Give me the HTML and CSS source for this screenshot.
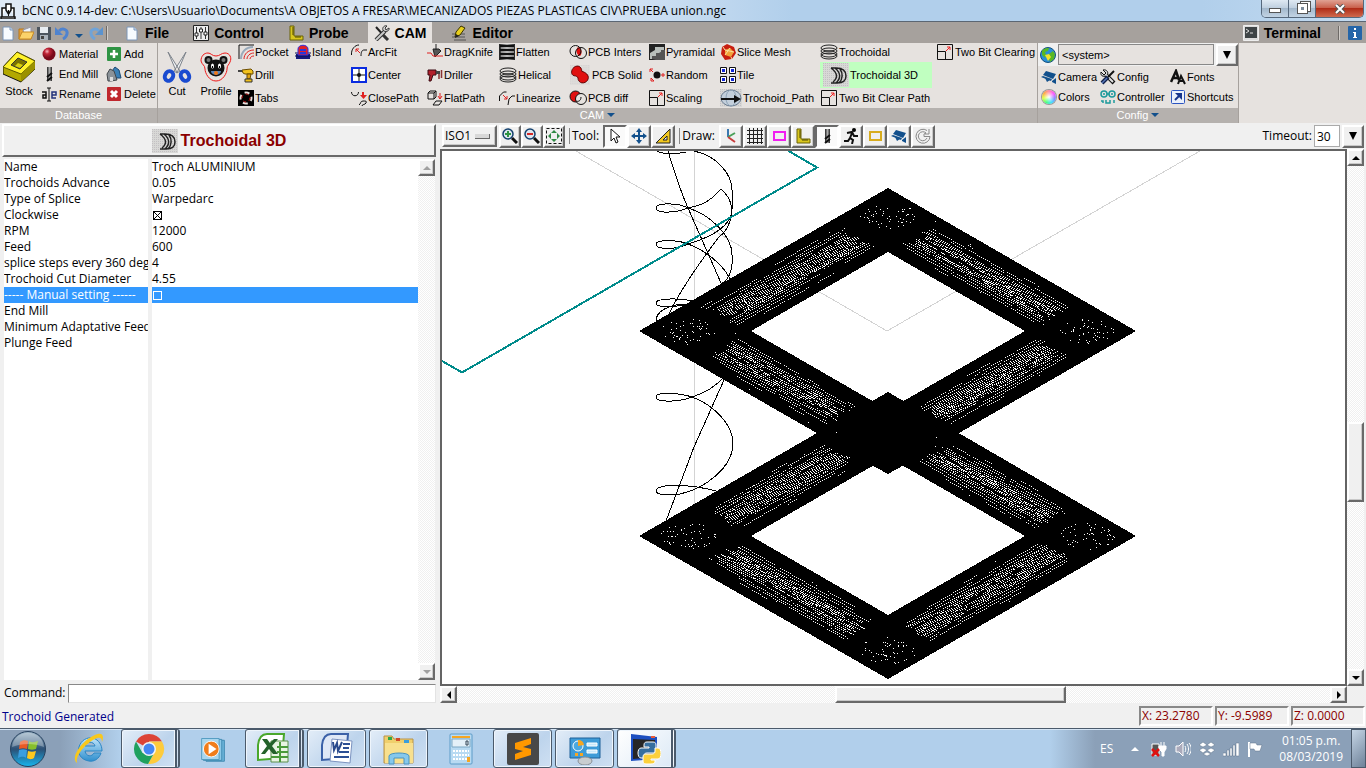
FILE: index.html
```html
<!DOCTYPE html>
<html lang="en">
<head>
    <meta charset="UTF-8">
    <meta name="viewport" content="width=device-width, initial-scale=1.0">
    <title>bCNC 0.9.14-dev</title>
    <link rel="stylesheet" href="styles.css">
</head>
<body>
    <!-- icon sprite -->
    <svg class="sprite" aria-hidden="true">
        <defs>
            <linearGradient id="steel"><stop offset="0" stop-color="#222"/><stop offset=".5" stop-color="#aaa"/><stop offset="1" stop-color="#222"/></linearGradient>
            <linearGradient id="sky" x2="0" y2="1"><stop offset="0" stop-color="#bfe4fa"/><stop offset="1" stop-color="#2f8fce"/></linearGradient>
            <linearGradient id="orb" x2="0" y2="1"><stop offset="0" stop-color="#9db6c8"/><stop offset=".5" stop-color="#2b4f74"/><stop offset="1" stop-color="#19b5ee"/></linearGradient>
            <radialGradient id="ball" cx=".35" cy=".3"><stop offset="0" stop-color="#f6b6be"/><stop offset=".4" stop-color="#c02436"/><stop offset="1" stop-color="#7a0a1a"/></radialGradient>
            <pattern id="grain" width="2" height="2" patternUnits="userSpaceOnUse"><rect width="2" height="2" fill="#d8d8d6"/><path d="M0 0h1v1H0z" fill="#c3c0c3"/></pattern>
        </defs>
        <symbol id="logo" viewBox="0 0 16 16"><path d="M1 14h14v2H1zM2 14V5h4M14 14V5h-3M6 1h5v6l-2.500 4L6 7z" fill="#fff" stroke="#111" stroke-width="1.500"/><path d="M8.500 7v6" stroke="#111"/></symbol>
        <symbol id="new" viewBox="0 0 16 16"><path d="M3 2h7l3 3v10H3z" fill="#f7fbff" stroke="#7d96b8"/><path d="M10 2v3h3" fill="#cfe0f2" stroke="#7d96b8"/></symbol>
        <symbol id="open" viewBox="0 0 16 16"><path d="M1 14V4h5l1 2h6v8z" fill="#e8a33a" stroke="#b87718"/><path d="M5 5l8-3v6H6z" fill="#eef4fa" stroke="#99a"/><path d="M1 14l3-7h12l-3 7z" fill="#fbd26a" stroke="#c88a22"/></symbol>
        <symbol id="save" viewBox="0 0 16 16"><path d="M1 2h14v13H1z" fill="#4d5660"/><path d="M4 2h8v6H4z" fill="#e8edf2"/><path d="M4 10h8v5H4z" fill="#aab3bc"/><path d="M5 11h3v3H5z" fill="#444"/></symbol>
        <symbol id="undo" viewBox="0 0 16 16"><path d="M5 6c4-4 9-1 8 3-.5 2-2 4-4 5" fill="none" stroke="#4f83cf" stroke-width="3"/><path d="M1 2v8h8z" fill="#4f83cf"/></symbol>
        <symbol id="redo" viewBox="0 0 16 16"><path d="M11 6C7 2 2 5 3 9c.5 2 2 4 4 5" fill="none" stroke="#6fa3d8" stroke-width="3"/><path d="M15 2v8H7z" fill="#5b93cf"/></symbol>
        <symbol id="control" viewBox="0 0 16 16"><path d="M.5.500h15v15H.500z" fill="#eee" stroke="#222"/><path d="M3.500 2v12M8 2v12M12.500 2v12" stroke="#333"/><path d="M2 8h3v3H2zM6.500 4h3v3h-3zM11 7h3v3h-3z" fill="#fff" stroke="#222"/></symbol>
        <symbol id="ruler" viewBox="0 0 16 16"><path d="M2 1h4v10h9v4H2z" fill="#d8c61e" stroke="#6b6208"/><path d="M6 3H4M6 5H4M6 7H4M6 9H4M8 11v2M10 11v2M12 11v2" stroke="#4d4605"/></symbol>
        <symbol id="tools" viewBox="0 0 16 16"><path d="M2 2l10 11" stroke="#222" stroke-width="2"/><path d="M9 10l5 5" stroke="#333" stroke-width="3"/><path d="M2 15l9-9" stroke="#333" stroke-width="4"/><path d="M2 15l9-9" stroke="#ccc" stroke-width="2"/><path d="M15 3l-3 2-1-2 2-2c-3-1-5 2-4 4 2 3 7 1 6-2z" fill="#ddd" stroke="#333"/></symbol>
        <symbol id="config" viewBox="0 0 16 16"><path d="M5 5l9 9" stroke="#111" stroke-width="4"/><path d="M1 3l3 3 2-2-3-3c4-1 6 3 4 5S0 8 1 3z" fill="#ddd" stroke="#111"/><path d="M6 6l7 7" stroke="#e4e4e4" stroke-width="2"/><path d="M2 14l6-6" stroke="#10204a" stroke-width="4"/><path d="M2 14l5-5" stroke="#5877b8" stroke-width="1.500"/><path d="M8 8l6-6" stroke="#111" stroke-width="2"/></symbol>
        <symbol id="editor" viewBox="0 0 16 16"><path d="M1 9h13M1 12h13M3 15h12" stroke="#555"/><path d="M4 12l1-5 5-6 4 2-5 7z" fill="#e8cf1c" stroke="#3a3200"/><path d="M4 13l1-4 3 2z" fill="#222"/></symbol>
        <symbol id="terminal" viewBox="0 0 16 16"><path d="M.5.500h15v15H.500z" fill="#ddd" stroke="#eee"/><path d="M2 2h12v11H2z" fill="#3e4446"/><path d="M3 4l3 2-3 2M7 8h3" fill="none" stroke="#ddd"/></symbol>
        <symbol id="info" viewBox="0 0 16 16"><rect x="1" y="1" width="14" height="14" rx="1" fill="#2565a8"/><path d="M7 3h2v2H7zM6 7h3v5h1v1H6v-1h1V8H6z" fill="#fff"/></symbol>

        <symbol id="stock" viewBox="0 0 32 32"><path d="M0 16L14 1l18 9v8L18 31 0 23z" fill="#b3a800" stroke="#111"/><path d="M0 16L14 1l18 9-14 13z" fill="#fff22a" stroke="#5b5600"/><path d="M8 14l7-7 9 4-7 7z" fill="#7a7200" stroke="#333"/><path d="M12 15l3-3 5 2-3 3z" fill="#d9cf10"/><path d="M18 23l14-13v8L18 31z" fill="#9b9100"/></symbol>
        <symbol id="material" viewBox="0 0 16 16"><circle cx="8" cy="8" r="6.500" fill="url(#ball)"/></symbol>
        <symbol id="endmill" viewBox="0 0 16 16"><path d="M6 1h5v14H6z" fill="url(#steel)"/><path d="M6 11l5-4M6 15l5-4" stroke="#111" stroke-width="2"/></symbol>
        <symbol id="rename" viewBox="0 0 16 16"><path d="M6 2h4M6 15h4M8 2v13" stroke="#111" fill="none"/><path d="M1 6h4v6H2V9h3" fill="none" stroke="#111" stroke-width="1.500"/><path d="M11 9h4V6h-4v6h4" fill="none" stroke="#24337c" stroke-width="1.500"/></symbol>
        <symbol id="add" viewBox="0 0 16 16"><rect x="1" y="1" width="14" height="14" rx="1" fill="#2f9444"/><path d="M8 4v8M4 8h8" stroke="#fff" stroke-width="2.500"/></symbol>
        <symbol id="clone" viewBox="0 0 16 16"><path d="M6 5l3-4 4 3 2 8H7z" fill="#3a7fb5" stroke="#1c4870"/><path d="M1 8l3-5 4 2 3 9-6 1H2z" fill="#8b9298" stroke="#41474c"/><path d="M4 11h3v4H4z" fill="#ddd"/></symbol>
        <symbol id="delete" viewBox="0 0 16 16"><rect x="1" y="1" width="14" height="14" rx="1" fill="#c0272d"/><path d="M5 5l6 6M11 5l-6 6" stroke="#fff" stroke-width="3"/></symbol>
        <symbol id="cut" viewBox="0 0 32 32"><path d="M7 1l12 19-3 2zM25 1L13 20l3 2z" fill="#eef0f2" stroke="#7e848c"/><ellipse cx="8" cy="25" rx="4" ry="5" transform="rotate(25 8 25)" fill="#e6e2df" stroke="#1a4bd0" stroke-width="4"/><ellipse cx="24" cy="25" rx="4" ry="5" transform="rotate(-25 24 25)" fill="#e6e2df" stroke="#1a4bd0" stroke-width="4"/></symbol>
        <symbol id="profile" viewBox="0 0 32 32"><path d="M8 2c3 0 4 3 8 3s5-3 9-3c5 0 7 5 5 9-1 3-3 3-3 7s-4 12-11 12S5 22 5 18 2 14 1 10c0-5 3-8 7-8z" fill="none" stroke="#f01818"/><circle cx="8.500" cy="9" r="4" fill="#111"/><circle cx="23.500" cy="9" r="4" fill="#111"/><circle cx="8.500" cy="9" r="2" fill="#777"/><circle cx="23.500" cy="9" r="2" fill="#777"/><circle cx="16" cy="17" r="8.500" fill="#111"/><ellipse cx="12.500" cy="15" rx="1.500" ry="2.500" fill="#fff"/><ellipse cx="19.500" cy="15" rx="1.500" ry="2.500" fill="#fff"/><path d="M12 15h1v2h-1zM19 15h1v2h-1z"/><path d="M11 20c0 5 10 5 10 0z" fill="#5a86b8"/><circle cx="16" cy="22" r="2" fill="#f07818"/></symbol>
        <symbol id="pocket" viewBox="0 0 16 16"><path d="M1 15V1h15" fill="none" stroke="#111"/><path d="M3 15C3 8 8 3 15 3" fill="none" stroke="#9ab" stroke-width="2"/><path d="M6 15c0-5 4-9 10-9M9 15c0-3 3-6 7-6M12 15c0-2 2-3 4-3" fill="none" stroke="#e02020"/></symbol>
        <symbol id="island" viewBox="0 0 16 16"><path d="M1 10h14v5H1z" fill="#141a7c"/><path d="M0 12h16M0 9h16" stroke="#0a0f55"/><path d="M3 11V5c0-5 10-5 10 0v6z" fill="#e02028" stroke="#3030e0"/><path d="M5 6h6M5 9h6" stroke="#2a36d8" stroke-width="2"/></symbol>
        <symbol id="drill" viewBox="0 0 16 16"><path d="M4 3l9-1 2 2v3H7L5 6z" fill="#f2c21e" stroke="#6b4c00"/><path d="M0 4h4" stroke="#444" stroke-width="2"/><path d="M9 7h4l-1 5H9z" fill="#e0a412" stroke="#6b4c00"/><path d="M7 12h7v3H7z" fill="#f2c21e" stroke="#333"/></symbol>
        <symbol id="tabs" viewBox="0 0 16 16"><path d="M0 0h16v16H0z"/><circle cx="8" cy="8" r="5.500" fill="none" stroke="#e8e2df" stroke-width="2" stroke-dasharray="5 3.600" stroke-dashoffset="2"/><circle cx="8" cy="8" r="4" fill="none" stroke="#d01818" stroke-dasharray="3 3"/></symbol>
        <symbol id="arcfit" viewBox="0 0 16 16"><path d="M.5 11C0 5 4 1 8 1M10 12c0-4 1-6 3-6h3" fill="none" stroke="#111"/><path d="M9 9L5 5m0 3V5h3" fill="none" stroke="#e02020"/></symbol>
        <symbol id="center" viewBox="0 0 16 16"><path d="M1 1h14v14H1z" fill="#fff" stroke="#0a2be0" stroke-width="2"/><path d="M8 2v12M2 8h12" stroke="#111"/><circle cx="8" cy="8" r="2" fill="#111"/></symbol>
        <symbol id="closepath" viewBox="0 0 16 16"><path d="M.5 2c0 5 7 5 7 0M8 15c2-1 1-4 4-4s4 0 3 2-4 1-4 3" fill="none" stroke="#111"/><path d="M12 2v4" stroke="#e02020" stroke-width="2"/><path d="M9 5h7l-3.500 4z" fill="#e02020"/></symbol>
        <symbol id="dragknife" viewBox="0 0 16 16"><path d="M9 0v6M6 5h6l2 2-6 6z" fill="#555" stroke="#222"/><path d="M0 9h4l2 3h10" fill="none" stroke="#e02020"/></symbol>
        <symbol id="driller" viewBox="0 0 16 16"><path d="M1 3h8v5H6l-2 6H2l1-6H1z" fill="#b3202c" stroke="#3a0810"/><path d="M9 4h4v3H9z" fill="#444"/><path d="M12 7v5M14.500 3v8" stroke="#833" stroke-width="1.500"/></symbol>
        <symbol id="flatpath" viewBox="0 0 16 16"><path d="M1 3l2-2h6v6L7 9H1zM1 3h6v6M7 3l2-2M6 15l3-4h6l-3 4z" fill="none" stroke="#111"/><path d="M13 3v6m-2-3l2 3 2-3" fill="none" stroke="#e02020"/></symbol>
        <symbol id="flatten" viewBox="0 0 16 16"><path d="M0 0h16v16H0z" fill="url(#steel)"/><path d="M1 2h14M1 6h14M1 10h14M1 14h14" stroke="#111" stroke-width="2"/><path d="M2 4h13M2 8h13M2 12h13" stroke="#ccc"/></symbol>
        <symbol id="helical" viewBox="0 0 18 16"><g fill="none" stroke="#222"><ellipse cx="9" cy="4" rx="8" ry="3"/><ellipse cx="9" cy="7" rx="8" ry="3"/><ellipse cx="9" cy="10" rx="8" ry="3"/><ellipse cx="9" cy="12" rx="8" ry="3"/></g></symbol>
        <symbol id="linearize" viewBox="0 0 16 16"><path d="M.5 11V6l4-4h3M9 15l1-6 3-3h3" fill="none" stroke="#111"/><path d="M4 5l4 4m0-3v3H5" fill="none" stroke="#e02020"/></symbol>
        <symbol id="pcbinters" viewBox="0 0 18 16"><path d="M9 3a5.500 5.500 0 0 1 2 9 5.500 5.500 0 0 1-2-9z" fill="#e01010"/><circle cx="6.500" cy="7" r="5.500" fill="none" stroke="#111"/><circle cx="12" cy="9" r="5.500" fill="none" stroke="#111"/></symbol>
        <symbol id="pcbdiff" viewBox="0 0 18 16"><circle cx="6.500" cy="6.500" r="5.500" fill="#e01010" stroke="#111"/><circle cx="12" cy="9" r="5.500" fill="#e6e2df" stroke="#111"/><path d="M7 11c2 1 5 0 5-4" fill="none" stroke="#111"/></symbol>
        <symbol id="pcbsolid" viewBox="0 0 22 22"><path d="M0 0h22v22H0z" fill="url(#grain)" opacity=".5"/><path d="M3 4c4-5 10-3 10 3 4 1 8 4 7 8-1 5-9 7-11 1 0-3-1-3-3-4-5 0-5-5-3-8z" fill="#e01010" stroke="#500"/></symbol>
        <symbol id="pyramidal" viewBox="0 0 16 16"><path d="M0 0h16v16H0z" fill="#222"/><path d="M1 15V9l5-3V3h9v4l-5 2v6z" fill="#b9bfbb"/><path d="M3 15v-3h4V9h5V6h4v10H7z" fill="#555"/></symbol>
        <symbol id="random" viewBox="0 0 16 16"><circle cx="8" cy="8" r="3.500" fill="#111"/><path d="M1 5V2h3M1 2l3 3M12 8h4m-2-2v4M2 11l3 3H2z" fill="none" stroke="#e02020"/></symbol>
        <symbol id="scaling" viewBox="0 0 16 16"><path d="M.5.500h15v15H.500zM.5 7.500h8v8" fill="none" stroke="#111"/><path d="M9 7l4-4M10 3h3v3" fill="none" stroke="#f02020"/></symbol>
        <symbol id="slice" viewBox="0 0 16 16"><path d="M2 3l5-3 7 3 2 6-4 6-7 1-4-6z" fill="#c81e10"/><path d="M5 6l5-2 4 4-3 5-6-2z" fill="#f2a23a"/><path d="M5 6l9 2M10 4l-5 7M3 3l2 3M11 13l1 2" stroke="#fbe0a0"/></symbol>
        <symbol id="tile" viewBox="0 0 16 16"><path d="M.5.500h6v6h-6zM9.500.500h6v6h-6zM.5 9.500h6v6h-6zM9.500 9.500h6v6h-6z" fill="#fff" stroke="#111"/><path d="M2 2h3v3H2zM11 2h3v3h-3zM2 11h3v3H2zM11 11h3v3h-3z" fill="#1226d8"/></symbol>
        <symbol id="trochpath" viewBox="0 0 22 18"><path d="M0 0h22v18H0z" fill="url(#grain)"/><ellipse cx="11" cy="9" rx="10" ry="8" fill="#c3cfdb" stroke="#6a7c90"/><ellipse cx="11" cy="9" rx="5" ry="8" fill="none" stroke="#8fa4b8"/><path d="M1 10h14" stroke="#111" stroke-width="2"/><path d="M14 6l7 4-7 4z" fill="#111"/></symbol>
        <symbol id="troch3d" viewBox="0 0 26 24"><path d="M0 0h26v24H0z" fill="url(#grain)"/><path d="M8 5h5M8 20h6M8 5c7 5 7 10 2 14M12 5c6 5 6 10 1 15M13 5c8 0 10 4 10 8s-3 7-9 7M17 6c3 4 3 10-1 14" fill="none" stroke="#222" stroke-width="1.500"/></symbol>
        <symbol id="globe" viewBox="0 0 16 16"><circle cx="8" cy="8" r="7.500" fill="#2a8fd8" stroke="#14507c"/><path d="M2 4c2-3 5-3 7-3l-1 3-3 1 1 3-1 3-3-3zM9 7l4-3 2 3-1 5-4 3-1-4z" fill="#58b824"/><path d="M5 8l3 6 3-4-2-3z" fill="#f2e22a"/></symbol>
        <symbol id="camera" viewBox="0 0 16 16"><path d="M2 6l3-4 10 3-3 5z" fill="#12508c"/><path d="M0 8l2-1 9 3-1 2z" fill="#12508c"/><path d="M4 9l5 2-3 2z" fill="#12508c"/><path d="M11 12l4-3v6l-4-2z" fill="#12508c"/></symbol>
        <symbol id="fonts" viewBox="0 0 16 16"><path d="M1 13L6 2l3 9M3 9h5" fill="none" stroke="#111" stroke-width="2.500"/><path d="M8 15l3-8 4 8M9 12h4" fill="none" stroke="#111" stroke-width="2"/></symbol>
        <symbol id="controller" viewBox="0 0 16 16"><g fill="none" stroke="#1e9a9c" stroke-width="1.500"><circle cx="4" cy="5" r="3"/><circle cx="12" cy="5" r="3"/><path d="M7 5h2M3 5h2M11 5h2M1 12h2v2M6 11v3h4v-3M14 11v3"/></g></symbol>
        <symbol id="shortcut" viewBox="0 0 16 16"><rect x="1.500" y="1.500" width="13" height="13" rx="1" fill="#eaf0fb" stroke="#2c55c0"/><path d="M5 11l4-4" stroke="#16348c" stroke-width="2"/><path d="M5 4h7v7z" fill="#16348c"/></symbol>

        <symbol id="zoomin" viewBox="0 0 16 16"><circle cx="6" cy="6" r="5" fill="#dde6f0" stroke="#12406e" stroke-width="1.500"/><path d="M10 10l5 5" stroke="#111" stroke-width="3"/><path d="M6 3v6M3 6h6" stroke="#2f9444" stroke-width="2"/></symbol>
        <symbol id="zoomout" viewBox="0 0 16 16"><circle cx="6" cy="6" r="5" fill="#dde6f0" stroke="#12406e" stroke-width="1.500"/><path d="M10 10l5 5" stroke="#111" stroke-width="3"/><path d="M3 6h6" stroke="#d02828" stroke-width="2"/></symbol>
        <symbol id="fit" viewBox="0 0 16 16"><path d="M.5.500h15v15H.500z" fill="none" stroke="#111" stroke-dasharray="3 2"/><path d="M8 2l3 3H5zM8 14l3-3H5zM2 8l3-3v6zM14 8l-3-3v6z" fill="#2f8a44"/></symbol>
        <symbol id="pointer" viewBox="0 0 16 16"><path d="M4 1v12l3-3 2 5 2-1-2-5h4z" fill="#fff" stroke="#111"/></symbol>
        <symbol id="pan" viewBox="0 0 16 16"><path d="M8 2v12M2 8h12" stroke="#12508c" stroke-width="2"/><path d="M8 0l3 4H5zM8 16l3-4H5zM0 8l4-3v6zM16 8l-4-3v6z" fill="#12508c"/></symbol>
        <symbol id="square" viewBox="0 0 16 16"><path d="M1 15L15 1v14z" fill="#f2c81e" stroke="#222"/><path d="M8 12l4-4v4z" fill="#f0f0f0" stroke="#222"/></symbol>
        <symbol id="axes" viewBox="0 0 16 16"><path d="M5 1v8" stroke="#3a78b0" stroke-width="2"/><path d="M5 9l7-4" stroke="#4aa058" stroke-width="2"/><path d="M5 9l7 5" stroke="#c83c3c" stroke-width="2"/></symbol>
        <symbol id="grid" viewBox="0 0 16 16"><path d="M2.500 0v16M6.500 0v16M10.500 0v16M14.500 0v16M0 2.500h16M0 6.500h16M0 10.500h16M0 14.500h16" stroke="#222"/></symbol>
        <symbol id="margin" viewBox="0 0 16 16"><path d="M3 4h11v8H3z" fill="none" stroke="#f01ef0" stroke-width="2"/></symbol>
        <symbol id="workarea" viewBox="0 0 16 16"><path d="M3 4h11v8H3z" fill="none" stroke="#d8ac1e" stroke-width="2"/></symbol>
        <symbol id="run" viewBox="0 0 16 16"><circle cx="11" cy="2" r="2"/><path d="M4 5l5-1 2 4h4M9 5L7 10l3 2-1 4M7 10l-2 3H1" fill="none" stroke="#111" stroke-width="2"/></symbol>
        <symbol id="refresh" viewBox="0 0 16 16"><path d="M12 2.500a7 7 0 1 0 3 6H9V6l2-1" fill="none" stroke="#888"/><path d="M11 5a4.500 4.500 0 1 0 1 5" fill="none" stroke="#888"/><path d="M14 1v5h-4" fill="none" stroke="#888"/></symbol>

        <symbol id="start" viewBox="0 0 36 36"><circle cx="18" cy="18" r="17.500" fill="url(#orb)" stroke="#27415e"/><path d="M10 11c3-2 5-2 8-1l-1 8c-3-1-5-1-8 0z" fill="#ea5a24"/><path d="M19 10c3 2 6 1 9 0l-2 8c-3 1-5 1-8 0z" fill="#86bf2c"/><path d="M9 19c3-1 5-1 8 0l-1 8c-3-2-5-1-8 0z" fill="#3a9ee0"/><path d="M18 20c3 1 5 1 8 0l-2 7c-3 2-5 1-7 0z" fill="#fcc81e"/><path d="M2 16C4-3 32-3 34 16 24 12 12 12 2 16z" fill="#fff" opacity=".3"/></symbol>
        <symbol id="ie" viewBox="0 0 32 32"><path d="M28 20c-2 6-7 9-12 8C8 27 4 20 6 14 8 7 14 4 20 5c6 2 9 7 9 13H12c1 6 7 6 9 2zM12 13h10c-1-5-9-5-10 0z" fill="url(#sky)" stroke="#2b86c4"/><path d="M4 30C-4 24 12 4 25 1c5-1 6 3 4 8 0-4-2-5-5-4C14 9 2 22 4 30z" fill="#f8c81c"/></symbol>
        <symbol id="chrome" viewBox="0 0 32 32"><path d="M16 16L3 8.500A15 15 0 0 1 29 8.500H16z" fill="#dc4437"/><path d="M29 8.500A15 15 0 0 1 15 31l7-12-6-10.500z" fill="#fdcb3c"/><path d="M15 31A15 15 0 0 1 3 8.500L9.500 20 20 22z" fill="#1fa15e"/><circle cx="16" cy="16" r="7" fill="#f4f4f4"/><circle cx="16" cy="16" r="5.500" fill="#4587f3"/></symbol>
        <symbol id="media" viewBox="0 0 32 32"><path d="M8 6h21v24H8z" fill="#6bb3d8" stroke="#3a86ae"/><path d="M5 5h21v24H5z" fill="#8fcae8" stroke="#3a86ae"/><path d="M3 4h20v24H3z" fill="#a9d6ee" stroke="#4b97bd"/><circle cx="14" cy="16" r="9" fill="#f07d1c" stroke="#fff"/><path d="M11 10l9 6-9 6z" fill="#fff"/></symbol>
        <symbol id="excel" viewBox="0 0 32 32"><path d="M1 12C2 4 5 1 10 1h17l-2 24-24 2z" fill="#fff" stroke="#4aa82c" stroke-width="2"/><path d="M14 8h17v21H14z" fill="#e8f4e2" stroke="#5a8f4a"/><path d="M20 14h11M20 19h11M14 24h17M23 9v20" stroke="#4a9a3a" stroke-width="2"/><path d="M5 6h5l3 4 4-4h4l-6 7 6 8h-5l-4-5-4 5H4l6-8z" fill="#24622a"/></symbol>
        <symbol id="word" viewBox="0 0 32 32"><path d="M1 12C2 4 5 1 10 1h17l-2 24-24 2z" fill="#dfe8f6" stroke="#3b61a8" stroke-width="2"/><path d="M11 6l20 2-2 22-20-2z" fill="#fff" stroke="#7c93c0"/><path d="M22 11h7M22 15h6M18 19h10M13 24h15" stroke="#2c4f94" stroke-width="2"/><path d="M12 9l1 8 3-7 1 8 4-9" fill="none" stroke="#2a4a8c" stroke-width="2"/></symbol>
        <symbol id="explorer" viewBox="0 0 32 32"><path d="M1 6V3h8l2 3h19v24H1z" fill="#f0cf6c" stroke="#b8934a"/><path d="M5 4h4v3H5z" fill="#2ea84a"/><path d="M13 5h4v3h-4z" fill="#d04a28"/><path d="M21 7h5v3h-5z" fill="#3a9edc"/><path d="M2 10h28v20H2z" fill="#f8e08e"/><path d="M6 31v-8c0-4 20-4 20 0v8h-5v-6H11v6z" fill="#86c8ec" stroke="#4a94c0"/></symbol>
        <symbol id="calc" viewBox="0 0 24 32"><rect x="1" y="1" width="22" height="30" rx="1" fill="#b8daf2" stroke="#5c9cc8"/><path d="M3 3h18v2H3z" fill="#f5a623"/><path d="M3 6h18v8H3z" fill="#e4f0f8" stroke="#7ca8c4"/><path d="M17 8h2v4h-2z" fill="none" stroke="#345"/><path d="M4 18h16M4 22h16M4 26h16" stroke="#fff" stroke-width="2" stroke-dasharray="2 1"/><path d="M18 24h3v5h-3z" fill="#f5a623"/></symbol>
        <symbol id="sublime" viewBox="0 0 32 32"><rect width="32" height="32" rx="2" fill="#484848"/><path d="M8 10l16-5v6l-8 3 8 2v6L8 27v-6l8-3-8-2z" fill="#ff9800"/></symbol>
        <symbol id="panel" viewBox="0 0 32 32"><path d="M1 5h30v20H1z" fill="#3d9bd8" stroke="#1f6098"/><circle cx="9" cy="13" r="5" fill="#4aa8e0" stroke="#fff"/><path d="M9 13V7a6 6 0 0 1 6 5z" fill="#f5a623"/><path d="M18 10h10v3H18zM18 17h10v3H18z" fill="#c8e8fa" stroke="#fff"/><path d="M6 20h3v3H6zM11 20h3v3h-3z" fill="#f5a623"/><ellipse cx="16" cy="28" rx="7" ry="4" fill="#c9cdd0" stroke="#8a9096"/></symbol>
        <symbol id="python" viewBox="0 0 32 32"><path d="M2 1l26 3v22L2 28z" fill="#1d4fc0"/><path d="M4 6l22 1v17L4 26z" fill="#262626"/><path d="M22 3h4v2h-4z" fill="#e85a3a"/><path d="M18 9h6c2 0 3 1 3 3v5c0 2-1 3-3 3h-6c-2 0-3 1-3 3v2h-3c-4 0-4-10 0-10h8v-1h-5v-2c0-2 1-3 3-3z" fill="#376f9f" stroke="#fff"/><path d="M22 31h-5c-2 0-3-1-3-3v-4c0-2 1-3 3-3h6c2 0 3-1 3-3v-3h3c4 0 4 11 0 11h-7v1h4v2c0 1-2 2-4 2z" fill="#fbd03c" stroke="#fff"/></symbol>
        <symbol id="power" viewBox="0 0 16 16"><path d="M1 3h7v11H1z" fill="#555" stroke="#fff"/><path d="M8 5h7v3l-2 3v4h-2v-4L8 8zM10 1v4M13 1v4" fill="#fff" stroke="#fff"/><path d="M1 8l7 7M8 8l-7 7" stroke="#e01010" stroke-width="2.500"/></symbol>
        <symbol id="sound" viewBox="0 0 16 16"><path d="M1 5h3l4-4v14l-4-4H1z" fill="#aab" stroke="#fff"/><path d="M10 5c1 2 1 4 0 6M12 3c2 3 2 7 0 10M14 2c3 4 3 8 0 12" fill="none" stroke="#fff"/></symbol>
        <symbol id="dropbox" viewBox="0 0 16 16"><path d="M4 1l4 3-4 2-4-2zM12 1l4 3-4 2-4-2zM4 7l4 2-4 3-4-3zM12 7l4 2-4 3-4-3zM4 13l4-2 4 2-4 2z" fill="#fff" stroke="#5c7088" stroke-width=".5"/></symbol>
        <symbol id="signal" viewBox="0 0 16 16"><path d="M0 12h3v3H0zM4 9h2v6H4zM7 7h2v8H7zM10 4h2v11h-2zM13 2h3v13h-3z" fill="#fff" stroke="#5c7088" stroke-width=".5"/></symbol>
        <symbol id="flag" viewBox="0 0 16 16"><path d="M2 1v15" stroke="#fff" stroke-width="2"/><path d="M3 2h6l1 2h5l-2 6H8L7 8H3z" fill="#fff" stroke="#5c7088" stroke-width=".5"/></symbol>
    </svg>

    <header class="titlebar">
        <svg class="icon"><use href="#logo"/></svg>
        <h1>bCNC 0.9.14-dev: C:\Users\Usuario\Documents\A OBJETOS A FRESAR\MECANIZADOS PIEZAS PLASTICAS CIV\PRUEBA union.ngc</h1>
        <div class="window-buttons">
            <button class="win-btn" aria-label="Minimize"><span class="min-mark"></span></button>
            <button class="win-btn" aria-label="Restore"><span class="max-mark"></span></button>
            <button class="win-btn win-close" aria-label="Close"><svg width="12" height="10"><path d="M2 1l8 8M10 1l-8 8" stroke="#555" stroke-width="4"/><path d="M2 1l8 8M10 1l-8 8" stroke="#fff" stroke-width="2"/></svg></button>
        </div>
    </header>

    <nav class="tabbar">
        <div class="quick">
            <button aria-label="New"><svg class="icon"><use href="#new"/></svg></button>
            <button aria-label="Open"><svg class="icon"><use href="#open"/></svg></button>
            <button aria-label="Save"><svg class="icon"><use href="#save"/></svg></button>
            <button aria-label="Undo"><svg class="icon"><use href="#undo"/></svg></button>
            <button class="arrow-btn" aria-label="Undo list"><i class="arrow"></i></button>
            <button aria-label="Redo"><svg class="icon"><use href="#redo"/></svg></button>
        </div>
        <span class="divider"></span>
        <button class="tab"><svg class="icon"><use href="#new"/></svg>File</button>
        <button class="tab"><svg class="icon"><use href="#control"/></svg>Control</button>
        <button class="tab"><svg class="icon"><use href="#ruler"/></svg>Probe</button>
        <button class="tab active"><svg class="icon"><use href="#tools"/></svg>CAM</button>
        <button class="tab"><svg class="icon"><use href="#editor"/></svg>Editor</button>
        <button class="tab last"><svg class="icon"><use href="#terminal"/></svg>Terminal</button>
        <span class="divider"></span>
        <button class="info" aria-label="Info"><svg class="icon"><use href="#info"/></svg></button>
    </nav>

    <section class="ribbon">
        <div class="group">
            <div class="database">
                <button class="big"><svg class="icon-lg"><use href="#stock"/></svg>Stock</button>
                <div class="tools db-tools">
                    <button><svg class="icon"><use href="#material"/></svg>Material</button>
                    <button><svg class="icon"><use href="#endmill"/></svg>End Mill</button>
                    <button><svg class="icon"><use href="#rename"/></svg>Rename</button>
                    <button><svg class="icon"><use href="#add"/></svg>Add</button>
                    <button><svg class="icon"><use href="#clone"/></svg>Clone</button>
                    <button><svg class="icon"><use href="#delete"/></svg>Delete</button>
                </div>
            </div>
            <div class="group-label">Database</div>
        </div>
        <div class="group">
            <div class="cam">
                <button class="big"><svg class="icon-lg"><use href="#cut"/></svg>Cut</button>
                <button class="big"><svg class="icon-lg"><use href="#profile"/></svg>Profile</button>
                <div class="tools cam-tools">
                    <button><svg class="icon"><use href="#pocket"/></svg>Pocket</button>
                    <button><svg class="icon"><use href="#drill"/></svg>Drill</button>
                    <button><svg class="icon"><use href="#tabs"/></svg>Tabs</button>
                    <button class="alone"><svg class="icon"><use href="#island"/></svg>Island</button>
                    <button><svg class="icon"><use href="#arcfit"/></svg>ArcFit</button>
                    <button><svg class="icon"><use href="#center"/></svg>Center</button>
                    <button><svg class="icon"><use href="#closepath"/></svg>ClosePath</button>
                    <button><svg class="icon"><use href="#dragknife"/></svg>DragKnife</button>
                    <button><svg class="icon"><use href="#driller"/></svg>Driller</button>
                    <button><svg class="icon"><use href="#flatpath"/></svg>FlatPath</button>
                    <button><svg class="icon"><use href="#flatten"/></svg>Flatten</button>
                    <button><svg class="icon icon-wide"><use href="#helical"/></svg>Helical</button>
                    <button><svg class="icon"><use href="#linearize"/></svg>Linearize</button>
                    <button><svg class="icon icon-wide"><use href="#pcbinters"/></svg>PCB Inters</button>
                    <button><svg class="icon icon-md"><use href="#pcbsolid"/></svg>PCB Solid</button>
                    <button><svg class="icon icon-wide"><use href="#pcbdiff"/></svg>PCB diff</button>
                    <button><svg class="icon"><use href="#pyramidal"/></svg>Pyramidal</button>
                    <button><svg class="icon"><use href="#random"/></svg>Random</button>
                    <button><svg class="icon"><use href="#scaling"/></svg>Scaling</button>
                    <button><svg class="icon"><use href="#slice"/></svg>Slice Mesh</button>
                    <button><svg class="icon"><use href="#tile"/></svg>Tile</button>
                    <button><svg class="icon icon-md"><use href="#trochpath"/></svg>Trochoid_Path</button>
                    <button><svg class="icon icon-wide"><use href="#helical"/></svg>Trochoidal</button>
                    <button class="selected"><svg class="icon-troch"><use href="#troch3d"/></svg>Trochoidal 3D</button>
                    <button><svg class="icon icon-wide"><use href="#scaling"/></svg>Two Bit Clear Path</button>
                    <button class="alone"><svg class="icon icon-wide"><use href="#scaling"/></svg>Two Bit Clearing</button>
                </div>
            </div>
            <div class="group-label">CAM <i class="arrow"></i></div>
        </div>
        <div class="group config">
            <div class="config-body">
                <div class="language">
                    <svg class="icon"><use href="#globe"/></svg>
                    <select aria-label="Language"><option>&lt;system&gt;</option></select>
                    <button class="bevel drop" aria-label="Languages"><i class="arrow black"></i></button>
                </div>
                <div class="tools config-tools">
                    <button><svg class="icon"><use href="#camera"/></svg>Camera</button>
                    <button><svg class="icon"><use href="#config"/></svg>Config</button>
                    <button><svg class="icon"><use href="#fonts"/></svg>Fonts</button>
                    <button><i class="wheel"></i>Colors</button>
                    <button><svg class="icon"><use href="#controller"/></svg>Controller</button>
                    <button><svg class="icon"><use href="#shortcut"/></svg>Shortcuts</button>
                </div>
            </div>
            <div class="group-label">Config <i class="arrow"></i></div>
        </div>
    </section>

    <main class="workspace">
        <section class="sidebar">
            <h2 class="tool-title"><svg class="icon-troch"><use href="#troch3d"/></svg>Trochoidal 3D</h2>
            <div class="list">
                <div class="list-body">
                    <table>
                        <tr><th>Name</th><td>Troch ALUMINIUM</td></tr>
                        <tr><th>Trochoids Advance</th><td>0.05</td></tr>
                        <tr><th>Type of Splice</th><td>Warpedarc</td></tr>
                        <tr><th><label for="clockwise">Clockwise</label></th><td><input type="checkbox" id="clockwise" checked></td></tr>
                        <tr><th>RPM</th><td>12000</td></tr>
                        <tr><th>Feed</th><td>600</td></tr>
                        <tr><th>splice steps every 360 degre</th><td>4</td></tr>
                        <tr><th>Trochoid Cut Diameter</th><td>4.55</td></tr>
                        <tr class="selected-row"><th><label for="manual">----- Manual setting ------</label></th><td><input type="checkbox" id="manual"></td></tr>
                        <tr><th>End Mill</th><td></td></tr>
                        <tr><th>Minimum Adaptative Feed</th><td></td></tr>
                        <tr><th>Plunge Feed</th><td></td></tr>
                    </table>
                </div>
                <div class="scroll-v">
                    <button class="bevel" disabled aria-label="Up"><i class="arrow up"></i></button>
                    <div class="track"></div>
                    <button class="bevel" disabled aria-label="Down"><i class="arrow"></i></button>
                </div>
            </div>
            <div class="command">
                <label for="command">Command:</label>
                <input type="text" id="command">
            </div>
        </section>

        <section class="viewer">
            <div class="toolbar">
                <select class="bevel view-select" aria-label="View"><option>ISO1</option></select>
                <div class="zoom">
                    <button class="bevel" aria-label="Zoom in"><svg class="icon"><use href="#zoomin"/></svg></button>
                    <button class="bevel" aria-label="Zoom out"><svg class="icon"><use href="#zoomout"/></svg></button>
                    <button class="bevel" aria-label="Fit"><svg class="icon"><use href="#fit"/></svg></button>
                </div>
                <span class="bracket">Tool:</span>
                <div class="buttons tool-buttons">
                    <button class="bevel pressed" aria-label="Select"><svg class="icon"><use href="#pointer"/></svg></button>
                    <button class="bevel" aria-label="Pan"><svg class="icon"><use href="#pan"/></svg></button>
                    <button class="bevel" aria-label="Measure"><svg class="icon"><use href="#square"/></svg></button>
                </div>
                <span class="bracket">Draw:</span>
                <div class="buttons">
                    <button class="bevel" aria-label="Axes"><svg class="icon"><use href="#axes"/></svg></button>
                    <button class="bevel" aria-label="Grid"><svg class="icon"><use href="#grid"/></svg></button>
                    <button class="bevel" aria-label="Margins"><svg class="icon"><use href="#margin"/></svg></button>
                    <button class="bevel" aria-label="Probe"><svg class="icon"><use href="#ruler"/></svg></button>
                    <button class="bevel pressed" aria-label="Paths"><svg class="icon"><use href="#endmill"/></svg></button>
                    <button class="bevel" aria-label="Rapid"><svg class="icon"><use href="#run"/></svg></button>
                    <button class="bevel" aria-label="Workarea"><svg class="icon"><use href="#workarea"/></svg></button>
                    <button class="bevel" aria-label="Camera"><svg class="icon"><use href="#camera"/></svg></button>
                    <button class="bevel" aria-label="Refresh"><svg class="icon"><use href="#refresh"/></svg></button>
                </div>
                <div class="timeout">
                    <label for="timeout">Timeout:</label>
                    <input type="text" id="timeout" value="30">
                    <button class="bevel drop" aria-label="Timeout values"><i class="arrow black"></i></button>
                </div>
            </div>
            <div class="canvas">
                <svg class="drawing">
                    <g transform="translate(-442 -151)" fill="none" shape-rendering="crispEdges">
                        <path d="M576 151L887 331L1200 151M694.500 151V520" stroke="#d3d3d3"/>
                        <g stroke="#000">
                            <path d="M657 151Q666 156 686 152M694 151C718 156 732 175 732 190C734 220 728 230 719 237C700 262 680 290 668 316"/>
                            <path d="M668 151C676 178 684 199 688 208L721 283"/>
                            <path d="M721 189C708 204 698 206 688 208C676 213 656 214 656 208C656 202 679 203 688 208C709 214 732 235 732 255C733 268 730 279 721 284"/>
                            <path d="M721 189C728 196 731 200 732 210C731 225 715 236 688 244C676 250 656 250 656 244C656 239 679 240 688 244C705 250 722 264 729 277V282"/>
                            <path d="M693 301C681 298 656 298 656 303C656 309 680 306 693 304C668 303 655 312 656 322"/>
                            <path d="M723 378C713 389 702 394 692 397C680 402 656 403 656 397C656 391 680 393 692 397C714 405 733 425 733 443C733 468 704 489 680 494C664 496 656 494 656 491C656 483 690 484 716 491"/>
                            <path d="M724 380L694 447L666 521"/>
                        </g>
                        <path d="M787 150L817 167.500L462 372.500L442 361" stroke="#008b8b" stroke-width="2"/>
                        <g fill="#000" fill-rule="evenodd">
                            <path d="M888 188L1136 331L888 474L639 331zM888 252L1025 331L888 410L751 331z"/>
                            <path d="M888 392L1136 536L888 679L639 536zM888 457L1025 536L888 615L751 536z"/>
                            <path d="M888 392L960 434L888 474L815 434z"/>
                        </g>
                        <path id="gaps" stroke="#fff"/>
                    </g>
                </svg>
            </div>
            <div class="scroll-v canvas-v">
                <button class="bevel" aria-label="Scroll up"><i class="arrow up black"></i></button>
                <div class="track"><div class="bevel thumb"></div></div>
                <button class="bevel" aria-label="Scroll down"><i class="arrow black"></i></button>
            </div>
            <div class="scroll-h">
                <button class="bevel" aria-label="Scroll left"><i class="arrow left black"></i></button>
                <div class="track"><div class="bevel thumb"></div></div>
                <button class="bevel" aria-label="Scroll right"><i class="arrow right black"></i></button>
            </div>
        </section>
    </main>

    <footer class="status">
        <span class="message">Trochoid Generated</span>
        <span class="coord">X: 23.2780</span>
        <span class="coord">Y: -9.5989</span>
        <span class="coord">Z: 0.0000</span>
    </footer>

    <div class="taskbar">
        <button class="task start" aria-label="Start"><svg width="36" height="36"><use href="#start"/></svg></button>
        <button class="task" aria-label="Internet Explorer"><svg class="icon-lg"><use href="#ie"/></svg></button>
        <button class="task open stacked" aria-label="Chrome"><svg class="icon-lg"><use href="#chrome"/></svg></button>
        <button class="task" aria-label="Media Player"><svg class="icon-task"><use href="#media"/></svg></button>
        <button class="task open stacked" aria-label="Excel"><svg class="icon-lg"><use href="#excel"/></svg></button>
        <button class="task open" aria-label="Word"><svg class="icon-lg"><use href="#word"/></svg></button>
        <button class="task open" aria-label="Explorer"><svg class="icon-lg"><use href="#explorer"/></svg></button>
        <button class="task" aria-label="Calculator"><svg class="icon-lg"><use href="#calc"/></svg></button>
        <button class="task open" aria-label="Sublime Text"><svg class="icon-lg"><use href="#sublime"/></svg></button>
        <button class="task open" aria-label="Control Panel"><svg class="icon-lg"><use href="#panel"/></svg></button>
        <button class="task open current stacked" aria-label="Python"><svg class="icon-lg"><use href="#python"/></svg></button>
        <div class="tray">
            <span class="lang">ES</span>
            <i class="arrow up white"></i>
            <svg class="icon"><use href="#power"/></svg>
            <svg class="icon"><use href="#sound"/></svg>
            <svg class="icon"><use href="#dropbox"/></svg>
            <svg class="icon"><use href="#signal"/></svg>
            <svg class="icon"><use href="#flag"/></svg>
            <div class="clock">01:05 p.m.<br>08/03/2019</div>
            <button class="show-desktop" aria-label="Show desktop"></button>
        </div>
    </div>

    <script src="script.js"></script>
</body>
</html>
```

FILE: styles.css
```css
* {
    box-sizing: border-box;
}
body {
    margin: 0;
    height: 100vh;
    display: flex;
    flex-direction: column;
    overflow: hidden;
    background: #f0f0f0;
    color: #000;
    font-family: "Open Sans", "Noto Sans", sans-serif;
    font-size: 12px;
    line-height: 16px;
}
button, input, select {
    font: inherit;
    color: inherit;
    margin: 0;
    padding: 0;
    border: 0;
    border-radius: 0;
    background: none;
}
.sprite {
    position: absolute;
    width: 0;
    height: 0;
}
svg {
    display: block;
    flex: none;
}
.icon {
    width: 16px;
    height: 16px;
}
.icon-wide {
    width: 18px;
}
.icon-md {
    width: 22px;
    height: 20px;
}
.icon-troch {
    width: 26px;
    height: 24px;
}
.icon-task {
    width: 28px;
    height: 28px;
}
.icon-lg {
    width: 32px;
    height: 32px;
}
.arrow {
    display: inline-block;
    border: 4px solid transparent;
    border-top-color: #12508c;
    border-bottom: 0;
}
.arrow.black {
    border-top-color: #000;
}
.arrow.up {
    border-top: 0;
    border-bottom: 4px solid #a0a0a0;
}
.arrow.up.black {
    border-bottom-color: #000;
}
.arrow.up.white {
    border-bottom-color: #fff;
}
.arrow.left {
    border: 4px solid transparent;
    border-left: 0;
    border-right-color: #000;
}
.arrow.right {
    border: 4px solid transparent;
    border-right: 0;
    border-left-color: #000;
}
.bevel {
    display: flex;
    align-items: center;
    justify-content: center;
    background: #f0f0f0;
    border: 2px solid;
    border-color: #fff #696969 #696969 #fff;
    box-shadow: inset -1px -1px 0 #c8c8c8;
}
.bevel.pressed {
    background: #fafafa;
    border-color: #696969 #fff #fff #696969;
    box-shadow: none;
}

/* title bar */
.titlebar {
    display: flex;
    height: 22px;
    gap: 6px;
    background: linear-gradient(to right, #dfeaf6, #d3e3f4 45%, #b1cfeb 58%, #b1cfeb 88%, #c4dbf0);
    border-bottom: 1px solid #5b6673;
}
.titlebar .icon {
    margin-top: 3px;
}
.titlebar h1 {
    flex: 1;
    margin: 0;
    padding-top: 3px;
    font-size: 12px;
    font-weight: normal;
    white-space: nowrap;
}
.window-buttons {
    display: flex;
    height: 18px;
    margin-right: 2px;
    border: 1px solid #56687c;
    border-top: 0;
    border-radius: 0 0 5px 5px;
    overflow: hidden;
}
.win-btn {
    display: flex;
    align-items: center;
    justify-content: center;
    width: 27px;
    background: linear-gradient(#dfe9f3, #c0d0e0 45%, #a3b8cc 50%, #c3d4e4);
    border-right: 1px solid #56687c;
}
.win-close {
    width: 47px;
    border-right: 0;
    background: linear-gradient(#e0a293, #c9614c 45%, #b02d18 50%, #cf6a4e);
}
.min-mark {
    width: 12px;
    height: 5px;
    margin-top: 4px;
    background: #fff;
    border: 1px solid #555;
}
.max-mark {
    width: 9px;
    height: 9px;
    background: #7d8c9c;
    border: 3px solid #fff;
    outline: 1px solid #555;
    box-shadow: 3px -2px 0 0 #fff, 3px -2px 0 1px #555;
}

/* tab bar */
.tabbar {
    display: flex;
    align-items: center;
    height: 21px;
    background: #a6a19d;
    font: bold 14px "Liberation Sans", Arial, sans-serif;
}
.quick {
    display: flex;
    align-items: center;
    gap: 2px;
    width: 106px;
}
.arrow-btn {
    width: 14px;
}
.divider {
    width: 2px;
    height: 14px;
    border-left: 1px solid #6e6a67;
    border-right: 1px solid #d0ccc8;
}
.tab {
    display: flex;
    align-items: center;
    gap: 5px;
    height: 21px;
    margin: 0 7px;
    padding: 0 5px;
}
.divider + .tab {
    margin-left: 11px;
}
.tab.active {
    padding: 0 6px;
    background: #e6e2df;
}
.tab.last {
    margin: 0 12px 0 auto;
}
.info {
    margin: 0 3px 0 7px;
}

/* ribbon */
.ribbon {
    display: flex;
    height: 80px;
    background: #e6e2df;
    font: 11px "Liberation Sans", Arial, sans-serif;
}
.group {
    display: flex;
    flex-direction: column;
    border-right: 1px solid #a6a19d;
}
.group-label {
    height: 15px;
    line-height: 15px;
    margin-top: auto;
    text-align: center;
    color: #fff;
    background: #b5b1ae;
}
.group-label .arrow {
    vertical-align: 2px;
}
.database,
.cam {
    display: flex;
}
.big {
    display: flex;
    flex-direction: column;
    align-items: center;
    gap: 2px;
    width: 38px;
    height: 65px;
    padding-top: 8px;
    white-space: nowrap;
}
.tools {
    display: grid;
    grid-auto-flow: column;
    align-items: center;
}
.tools button {
    display: flex;
    align-items: center;
    gap: 1px;
    white-space: nowrap;
}
.tools .alone {
    grid-row: 1 / 4;
    align-self: start;
    padding-top: 1px;
}
.db-tools {
    grid-template-rows: repeat(3, 20px);
    grid-template-columns: 65px 51px;
    padding: 1px 0 0 3px;
    height: 62px;
}
.db-tools button {
    gap: 2px;
}
.cam .big {
    margin-right: 1px;
}
.cam-tools {
    grid-template-rows: 18px 28px 18px;
    grid-template-columns: 57px 56px 76px 72px 70px 80px 71px 100px 116px 101px;
    padding-left: 2px;
}
.tools .selected {
    height: 26px;
    padding: 0 14px 0 3px;
    margin-right: auto;
    background: #c0ffc0;
}
.config-body {
    display: flex;
    flex-direction: column;
}
.language {
    display: flex;
    align-items: center;
    height: 23px;
    padding-left: 2px;
    gap: 2px;
    background: #f0f0f0;
}
.language select {
    width: 156px;
    height: 21px;
    padding-left: 3px;
    background: #e6e2df;
    border: 1px solid #888;
    appearance: none;
}
.drop {
    width: 22px;
    height: 22px;
}
.drop .arrow {
    border-width: 8px 4px 0;
}
.config-tools {
    grid-auto-flow: row;
    grid-template-columns: 59px 70px 67px;
    grid-template-rows: 21px 20px;
    padding-left: 3px;
}
.wheel {
    width: 14px;
    height: 14px;
    margin: 0 1px;
    border-radius: 50%;
    background: radial-gradient(#fff, transparent 60%), conic-gradient(#f8a, #f5f, #88f, #4df, #4f8, #df4, #fa4, #f8a);
    box-shadow: 0 0 0 1px #999;
}

/* workspace */
.workspace {
    flex: 1;
    display: flex;
    gap: 4px;
    min-height: 0;
    padding: 1px 2px 0;
}
.sidebar {
    display: flex;
    flex-direction: column;
    width: 434px;
}
.tool-title {
    display: flex;
    align-items: center;
    justify-content: center;
    gap: 3px;
    height: 33px;
    margin: 0 0 1px;
    font: bold 16px "Liberation Sans", Arial, sans-serif;
    color: #8b0000;
    border: 2px solid;
    border-color: #fff #696969 #696969 #fff;
}
.list {
    flex: 1;
    display: flex;
    min-height: 0;
    padding: 1px 1px 0 2px;
}
.list-body {
    flex: 1;
    background: linear-gradient(to right, #fff 144px, #f0f0f0 144px, #f0f0f0 148px, #fff 148px);
}
.list table {
    width: 100%;
    table-layout: fixed;
    border-spacing: 0;
}
.list th,
.list td {
    height: 16px;
    padding: 0;
    font-weight: normal;
    text-align: left;
    white-space: nowrap;
}
.list th {
    width: 148px;
    border-right: 4px solid #f0f0f0;
    overflow: hidden;
}
.selected-row {
    background: #3399ff;
    color: #fff;
}
.list input {
    display: block;
    width: 9px;
    height: 9px;
    margin-left: 1px;
    border: 1px solid;
    appearance: none;
}
.list input:checked {
    background: linear-gradient(45deg, transparent 44%, #000 44%, #000 56%, transparent 56%), linear-gradient(-45deg, transparent 44%, #000 44%, #000 56%, transparent 56%);
}
.scroll-v {
    display: flex;
    flex-direction: column;
    width: 17px;
}
.scroll-v .bevel,
.scroll-h .bevel {
    min-width: 17px;
    min-height: 17px;
}
.scroll-v button:disabled .arrow:not(.up) {
    border-top-color: #a0a0a0;
}
.track {
    flex: 1;
    display: grid;
    background: repeating-conic-gradient(#fff 0 25%, #f0f0f0 0 50%) 0 0 / 2px 2px;
}
.command {
    display: flex;
    align-items: center;
    gap: 2px;
    height: 23px;
    padding: 3px 0 0 2px;
}
.command input {
    flex: 1;
    height: 19px;
    background: #fff;
    border: 1px solid;
    border-color: #888 #e3e3e3 #e3e3e3 #888;
}

/* viewer */
.viewer {
    flex: 1;
    display: grid;
    grid-template-columns: 1fr 17px;
    grid-template-rows: 25px 1fr 17px;
    min-width: 0;
}
.toolbar {
    grid-column: 1 / 3;
    display: flex;
    align-items: center;
    padding-bottom: 1px;
}
.toolbar .bevel {
    height: 23px;
}
.toolbar .view-select {
    width: 55px;
    height: 22px;
    margin: 0 2px;
    padding-left: 1px;
    appearance: none;
    background: linear-gradient(#d8d8d8, #d8d8d8) 31px 7px / 14px 4px no-repeat, linear-gradient(#696969, #696969) 31px 7px / 15px 5px no-repeat, #f0f0f0;
}
.zoom {
    display: flex;
}
.zoom .bevel {
    width: 22px;
}
.bracket {
    margin-left: 4px;
    padding-left: 2px;
    border-left: 1px solid #888;
}
.buttons {
    display: flex;
    margin-left: 4px;
}
.buttons .bevel {
    width: 24px;
}
.timeout {
    display: flex;
    align-items: center;
    gap: 2px;
    margin-left: auto;
}
.timeout input {
    width: 26px;
    height: 22px;
    padding-left: 2px;
    background: #fff;
    border: 1px solid #aaa;
}
.canvas {
    background: #fff;
    border: 2px solid #646464;
    overflow: hidden;
}
.drawing {
    width: 100%;
    height: 100%;
}
.canvas-v .track {
    grid-template-rows: 257fr 80fr 167fr;
}
.canvas-v .thumb {
    grid-row: 2;
}
.scroll-h {
    display: flex;
}
.scroll-h .track {
    grid-template-columns: 379fr 231fr 265fr;
}
.scroll-h .thumb {
    grid-column: 2;
}

/* status line */
.status {
    display: flex;
    align-items: center;
    height: 25px;
    padding: 2px 1px 1px 2px;
    gap: 2px;
    color: #8b0000;
}
.message {
    flex: 1;
    padding-top: 2px;
    color: #00008b;
}
.coord {
    width: 74px;
    height: 20px;
    padding-left: 1px;
    border: 2px solid;
    border-color: #888 #fff #fff #888;
}

/* taskbar */
.taskbar {
    display: flex;
    height: 40px;
    gap: 3px;
    border-top: 1px solid #4b5a6b;
    box-shadow: inset 0 1px 0 #d5e5f5;
    background: linear-gradient(to right, #8ba0b8, #8ba0b8 60px, #b1cfeb 120px, #b1cfeb 1050px, #8ba0b8 1095px);
}
.task {
    display: flex;
    align-items: center;
    justify-content: center;
    width: 59px;
}
.task.start {
    width: 56px;
}
.task.open {
    border: 1px solid #4b5a6b;
    border-radius: 3px;
    background: linear-gradient(135deg, #e3edf8, #bdd4ec 60%, #cfe0f2);
    box-shadow: inset 0 0 0 1px #eef5fc;
}
.task.stacked {
    border-right: 5px double #4b5a6b;
}
.task.current {
    background: linear-gradient(135deg, #fff, #dce9f6);
}
.tray {
    display: flex;
    align-items: center;
    gap: 8px;
    margin-left: auto;
    color: #fff;
}
.lang {
    margin-right: 10px;
}
.tray .arrow {
    margin-right: 4px;
}
.clock {
    margin-left: 8px;
    text-align: center;
}
.show-desktop {
    align-self: stretch;
    width: 15px;
    border: 1px solid #4b5a6b;
    background: linear-gradient(135deg, #c5d5e5, #6e8299);
}
```

FILE: script.js
```javascript
// Small gaps left between neighbouring trochoid passes
let seed = 7;
function rand() {
    seed = (seed * 16807) % 2147483647;
    return seed / 2147483647;
}

let d = "";
function dot(x, y) {
    d += "M" + Math.round(x) + " " + (Math.round(y) + 0.5) + "h1";
}

const passes = [-21, -17, -14, -11, -9, -7, -5, -3, -1, 1, 3, 5, 7, 9, 11, 14, 17, 21];

// arm from one corner centre to the next, cut between start and end
function arm(x1, y1, x2, y2, start, end) {
    const slope = (y2 - y1) / (x2 - x1);
    const lean = slope < 0 ? 0.87 : -0.87;
    passes.forEach(function (k) {
        const edge = Math.abs(k) / 21;
        const cut = edge > 0.9 ? rand() * 50 : rand() * 8;
        let left = 0;
        let on = true;
        for (let x = start + cut; x < end - cut; x += 2) {
            if (left <= 0) {
                on = rand() > (edge > 0.9 ? 0.7 : 0.12);
                left = 4 + rand() * 24;
            }
            left -= 2;
            if (on && rand() > 0.06) {
                const px = x + k * lean;
                dot(x1 + px, y1 + px * slope + k);
                // doubled gaps along the middle
                if (edge < 0.4 && rand() > 0.7) {
                    dot(x1 + px + 1, y1 + px * slope + k + 1);
                }
            }
        }
    });
    for (let i = 0; i < 8; i++) {
        const x = start + rand() * (end - start);
        dot(x1 + x, y1 + x * slope + (rand() - 0.5) * 54);
    }
}

function corner(cx, cy, rx, ry) {
    for (let i = 0; i < 55; i++) {
        const a = rand() * Math.PI * 2;
        const r = Math.sqrt(rand());
        dot(cx + Math.cos(a) * r * rx, cy + Math.sin(a) * r * ry);
    }
}

// upper diamond
arm(695, 331, 888, 220, 24, 166);
arm(888, 220, 1080, 331, 27, 168);
arm(695, 331, 888, 442, 26, 148);
arm(888, 442, 1080, 331, 45, 166);

// lower diamond
arm(695, 536, 888, 425, 26, 148);
arm(888, 425, 1080, 536, 45, 164);
arm(695, 536, 888, 647, 26, 166);
arm(888, 647, 1080, 536, 26, 170);

corner(688, 331, 28, 13);
corner(688, 536, 28, 13);
corner(1087, 331, 28, 13);
corner(1087, 536, 28, 13);
corner(888, 216, 28, 14);
corner(888, 650, 28, 14);

document.getElementById("gaps").setAttribute("d", d);
```
